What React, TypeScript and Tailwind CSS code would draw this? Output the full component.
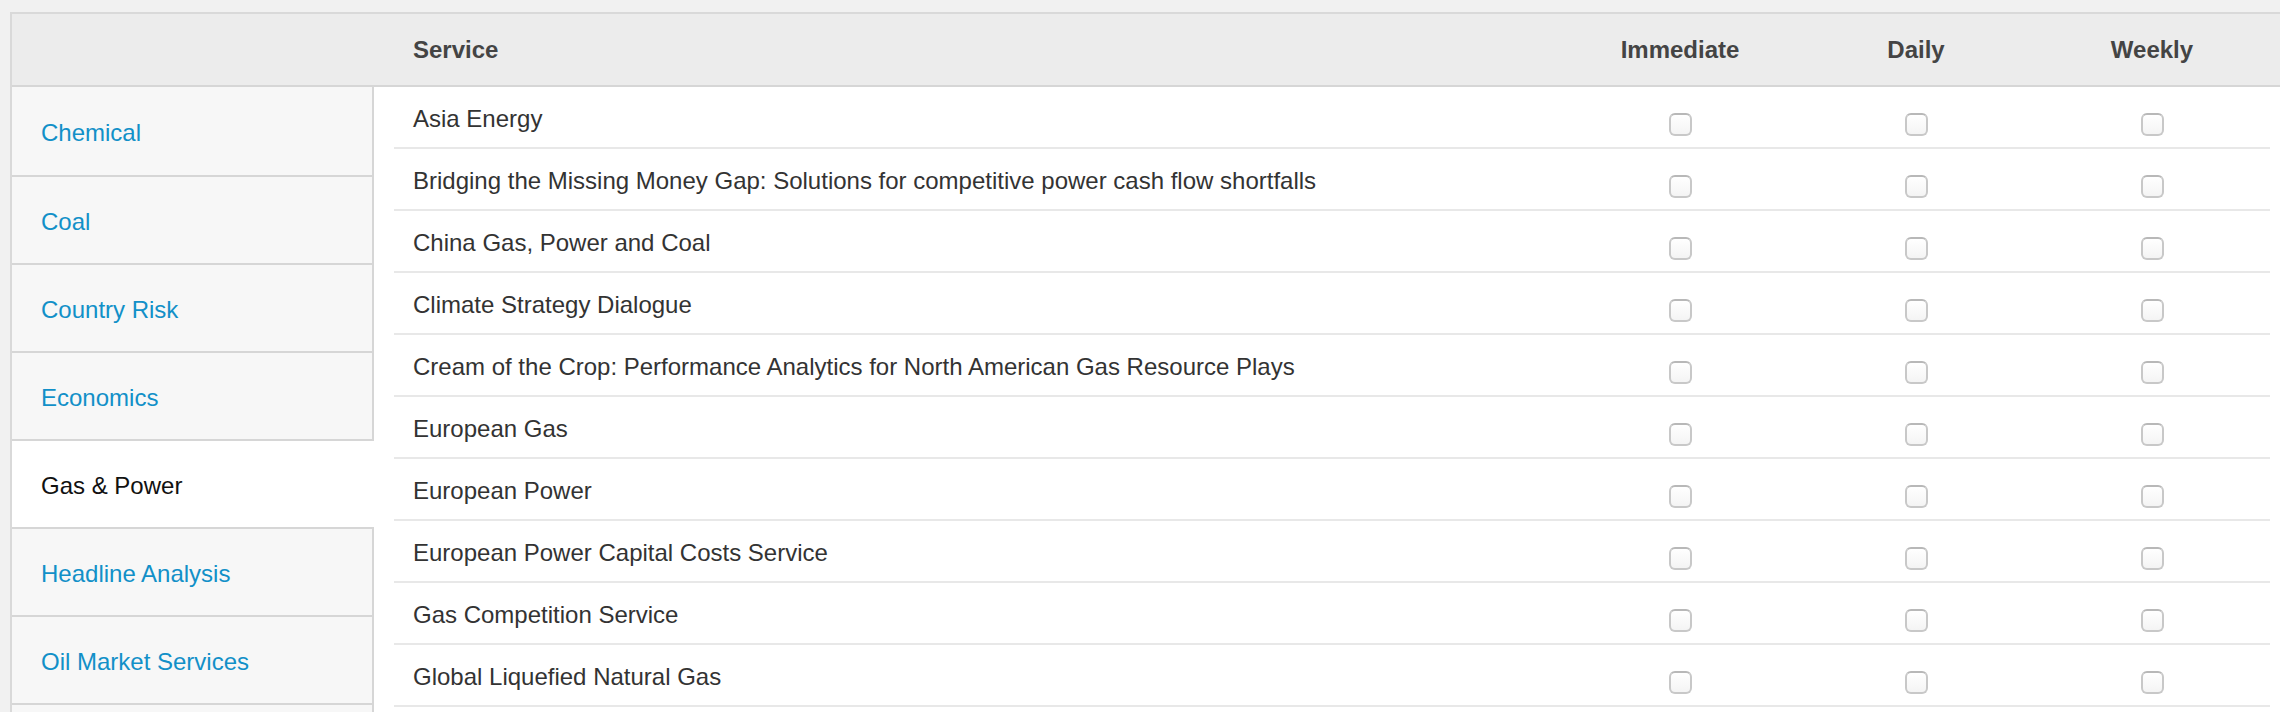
import React from "react";

const categories = [
  { name: "Chemical", active: false },
  { name: "Coal", active: false },
  { name: "Country Risk", active: false },
  { name: "Economics", active: false },
  { name: "Gas & Power", active: true },
  { name: "Headline Analysis", active: false },
  { name: "Oil Market Services", active: false },
];

const services = [
  "Asia Energy",
  "Bridging the Missing Money Gap: Solutions for competitive power cash flow shortfalls",
  "China Gas, Power and Coal",
  "Climate Strategy Dialogue",
  "Cream of the Crop: Performance Analytics for North American Gas Resource Plays",
  "European Gas",
  "European Power",
  "European Power Capital Costs Service",
  "Gas Competition Service",
  "Global Liquefied Natural Gas",
];

function Box() {
  return (
    <div className="w-[23px] h-[23px] rounded-[6px] border-2 border-[#c8c8c8] border-t-[#b8b8b8] bg-gradient-to-b from-white to-[#f4f4f4] mt-[26px]" />
  );
}

export default function App() {
  return (
    <div
      className="w-full h-[712px] overflow-hidden bg-[#f1f1f1] pt-[12px] pl-[10px]"
      style={{ fontFamily: '"Liberation Sans", Arial, Helvetica, sans-serif' }}
    >
      <div className="border-l-2 border-t-2 border-[#d9d9d9] bg-white">
        {/* Header */}
        <div className="flex h-[73px] bg-[#ececec] border-b-2 border-[#d6d6d6] text-[24px] font-bold text-[#444]">
          <div className="w-[382px] shrink-0" />
          <div className="w-[1168px] shrink-0 pl-[19px] flex items-center">Service</div>
          <div className="w-[236px] shrink-0 flex items-center justify-center">Immediate</div>
          <div className="w-[236px] shrink-0 flex items-center justify-center">Daily</div>
          <div className="w-[236px] shrink-0 flex items-center justify-center">Weekly</div>
        </div>
        {/* Body */}
        <div className="flex">
          <div className="w-[362px] shrink-0 flex flex-col">
            {categories.map((c, i) => (
              <div
                key={c.name}
                className={
                  (i === 0 ? "h-[90px] " : "h-[88px] ") +
                  (c.active
                    ? "bg-white border-b-2 border-[#d6d6d6] flex items-center pl-[29px] pt-[4px] text-[24px] text-[#111]"
                    : "bg-[#f7f7f7] border-b-2 border-r-2 border-[#d6d6d6] flex items-center pl-[29px] pt-[4px] text-[24px] text-[#1290c8]")
                }
              >
                {c.name}
              </div>
            ))}
            <div className="h-[88px] bg-[#f7f7f7] border-r-2 border-[#d6d6d6]" />
          </div>
          <div className="pl-[20px] flex flex-col">
            {services.map((s) => (
              <div key={s} className="flex h-[62px] border-b-2 border-[#e8e8e8]">
                <div className="w-[1168px] shrink-0 pl-[19px] flex items-center pt-[4px] text-[24px] text-[#333]">
                  {s}
                </div>
                <div className="w-[236px] shrink-0 flex justify-center">
                  <Box />
                </div>
                <div className="w-[236px] shrink-0 flex justify-center">
                  <Box />
                </div>
                <div className="w-[236px] shrink-0 flex justify-center">
                  <Box />
                </div>
              </div>
            ))}
          </div>
        </div>
      </div>
    </div>
  );
}
